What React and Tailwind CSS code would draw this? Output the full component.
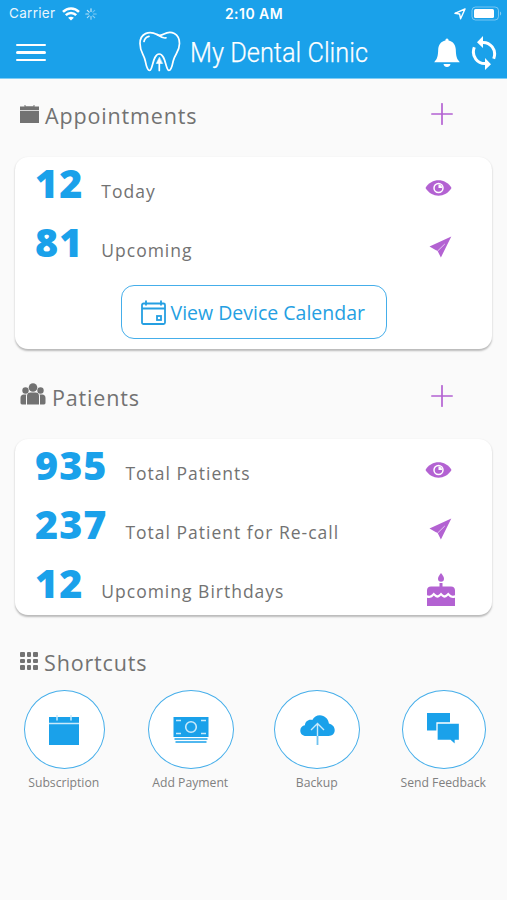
import React from "react";

const BLUE = "#1aa1ea";
const PURPLE = "#b362d2";

function StatusBar() {
  return (
    <div className="flex h-[27px] items-center justify-between pl-[9px] pr-[5px] text-white">
      <div className="flex w-[180px] items-center">
        <span className="font-['Inter',sans-serif] text-[13.500px] leading-[27px] tracking-[0.300px] opacity-90">Carrier</span>
        <svg className="ml-[7px] h-[14px] w-[18px]" viewBox="0 0 18 14" fill="none" stroke="currentColor" strokeWidth="2.500">
          <path d="M1 4.900C5.500.2 12.500.2 17 4.900" />
          <path d="M3.800 8.200c3-2.900 7.400-2.900 10.400 0" />
          <path d="M9 13.600 6.100 10.700c1.700-1.400 4.100-1.400 5.800 0Z" fill="currentColor" stroke="none" />
        </svg>
        <svg className="ml-[5px] h-[12px] w-[12px]" viewBox="-6 -6 12 12" stroke="currentColor" strokeWidth="1.100" strokeLinecap="round">
          <path d="M0-2.500V-5.200" opacity=".8" />
          <path d="M1.800-1.800 3.700-3.700" opacity=".35" />
          <path d="M2.500 0H5.200" opacity=".45" />
          <path d="M1.800 1.800 3.700 3.700" opacity=".5" />
          <path d="M0 2.500V5.200" opacity=".6" />
          <path d="M-1.800 1.800-3.700 3.700" opacity=".65" />
          <path d="M-2.500 0H-5.200" opacity=".7" />
          <path d="M-1.800-1.800-3.700-3.700" opacity=".75" />
        </svg>
      </div>
      <span className="-ml-[3px] whitespace-nowrap font-['Inter',sans-serif] text-[14px] font-semibold leading-[27px] tracking-[0.450px]">2:10 AM</span>
      <div className="flex w-[180px] items-center justify-end">
        <svg className="mr-[5px] h-[12px] w-[12px]" viewBox="0 0 12 12" fill="none" stroke="currentColor" strokeWidth="1.400" strokeLinejoin="round">
          <path d="M11 1 .9 5.300 5.600 6 6.600 10.800Z" />
        </svg>
        <svg className="h-[15px] w-[31px]" viewBox="0 0 31 15" fill="none">
          <rect x="1" y="1" width="26.500" height="13" rx="3.500" stroke="#fff" strokeOpacity=".4" strokeWidth="1" />
          <rect x="3" y="3" width="20" height="9" rx="1.500" fill="#fff" />
          <path d="M29 5.500c1.600.8 1.600 3.200 0 4Z" fill="#fff" opacity=".45" />
        </svg>
      </div>
    </div>
  );
}

function Header() {
  return (
    <header className="h-[79px] border-b border-[#7fcdf5] bg-[#1aa1ea] text-white">
      <StatusBar />
      <div className="flex h-[51px] items-center pl-[16px] pr-[10px]">
        <div className="flex w-[30px] flex-col gap-[5px]">
          <span className="h-[2.500px] rounded bg-white" />
          <span className="h-[2.500px] rounded bg-white" />
          <span className="h-[2.500px] rounded bg-white" />
        </div>
        <svg className="-mt-[2px] ml-[92px] h-[42px] w-[44px]" viewBox="0 0 44 42" fill="none" stroke="currentColor" strokeWidth="1.700" strokeLinecap="round" strokeLinejoin="round">
          <path d="M19 3.500C11-.8 2 2.500 2 12.500c0 8.500 3.800 10.500 5.300 17.500.9 4.500 2 9.500 4.200 9.500 3.500 0 3-16.500 9.700-16.500s6.300 16.500 9.800 16.500c2.200 0 3.300-5 4.200-9.500 1.500-7 6.300-9 6.300-17.500 0-10-8.500-13.500-15.500-9.500-2.500 1.500-4 2.200-7 .5Z" />
          <path d="M19 3.500C21.500 5 25 7.800 28 6.800M6 10.500c.6-3 2.200-4.600 5-5.200" />
          <path d="M21.300 39.500V31" />
          <path d="M21.300 26.500 18.300 32.500h6Z" fill="currentColor" strokeWidth=".6" />
        </svg>
        <svg className="-mt-[2px] ml-[7px] h-[40px] w-[182px] overflow-visible" viewBox="0 0 182 40">
          <text x="1" y="30" textLength="178" lengthAdjust="spacingAndGlyphs" fill="currentColor" stroke="currentColor" strokeWidth=".25" fontFamily="Roboto, sans-serif" fontWeight="300" fontSize="28.500">My Dental Clinic</text>
        </svg>
        <svg className="ml-auto h-[32px] w-[26px]" viewBox="0 0 26 32" fill="currentColor">
          <path d="M13 1.500c1.100 0 1.500.9 1.600 1.900 4.700.9 7 4.500 7.200 9.200.2 6.700.8 9.200 4 12.600H.2c3.200-3.400 3.800-5.900 4-12.600.2-4.700 2.500-8.300 7.200-9.200.1-1 .5-1.900 1.600-1.900ZM9.500 27h7c-.3 1.900-1.700 3-3.500 3s-3.200-1.100-3.500-3Z" />
        </svg>
        <svg className="ml-[11px] h-[34px] w-[26px]" viewBox="0 0 26 34" fill="none" stroke="currentColor" strokeWidth="3">
          <path d="M10.500 6.500C19.500 5.500 26 14 22.700 22.700" />
          <path d="M15.500 27.500C6.500 28.500 0 20 3.300 11.300" />
          <path d="M12 0v12L6 6.300ZM14 22v12l6-5.700Z" fill="currentColor" stroke="none" />
        </svg>
      </div>
    </header>
  );
}

function CalendarGlyph() {
  return (
    <svg className="mr-[6px] mt-[1px] h-[19px] w-[19px]" viewBox="0 0 19 19" fill="#727272">
      <path d="M0 1.500h3V3h1.500V0h1v1.500h8V0h1v3H16V1.500h3V5H0ZM0 5.700h19V18H0Z" />
      <path d="M3 1.500h13V4H3Z" />
    </svg>
  );
}

function PeopleGlyph() {
  return (
    <svg className="-mt-[5px] mr-[6px] h-[22px] w-[26px]" viewBox="0 0 26 22" fill="#727272">
      <circle cx="5.500" cy="7.500" r="3.200" />
      <circle cx="20.500" cy="7.500" r="3.200" />
      <circle cx="13" cy="4.500" r="4.300" />
      <path d="M7 21.500V13c0-2.400 1.300-3.500 3.500-3.500h5c2.200 0 3.500 1.100 3.500 3.500v8.500ZM.5 19.500V15c0-2.300 1.200-3.500 3.300-3.500h2.600c-.3.700-.4 1.300-.4 2v8H2c-1 0-1.500-.8-1.500-2ZM25.500 19.500V15c0-2.300-1.200-3.500-3.300-3.500h-2.600c.3.700.4 1.300.4 2v8h4c1 0 1.500-.8 1.500-2Z" />
    </svg>
  );
}

function GridGlyph() {
  return (
    <div className="mr-[6px] grid h-[18px] w-[18px] grid-cols-3 gap-[2px]">
      {Array.from({ length: 9 }, (_, i) => (
        <span key={i} className="rounded-[1px] bg-[#727272]" />
      ))}
    </div>
  );
}

function Plus() {
  return (
    <svg className="ml-auto mr-[54px] h-[22px] w-[22px]" viewBox="0 0 22 22" stroke={PURPLE} strokeWidth="1.700" strokeLinecap="round">
      <path d="M11 .8v20.400M.8 11h20.400" />
    </svg>
  );
}

function Heading({ icon, title, plus }) {
  return (
    <div className="flex h-[30px] items-center pl-[20px]">
      {icon}
      <h2 className="mt-[3px] text-[21.500px] leading-[30px] tracking-[0.850px]">{title}</h2>
      {plus && <Plus />}
    </div>
  );
}

function Eye() {
  return (
    <svg className="mr-[40px] mt-[3px] h-[16px] w-[27px]" viewBox="0 0 27 16">
      <path d="M.5 8C6.500-2.200 20.500-2.200 26.500 8 20.500 18.200 6.500 18.200.5 8Z" fill={PURPLE} />
      <circle cx="13.500" cy="8" r="4.500" fill={PURPLE} stroke="#fff" strokeWidth="1.500" />
      <path d="M13.500 8V4.500A3.500 3.500 0 0 1 17 8Z" fill="#fff" />
    </svg>
  );
}

function Plane() {
  return (
    <svg className="mr-[40px] mt-[4px] h-[22px] w-[23px]" viewBox="0 0 23 22">
      <path d="M22.300.4.500 10.600l6.500 3.600 1.500.6 3.400 6.700Z" fill={PURPLE} />
      <path d="M15.800 8 8.800 14.800" stroke="#ecd5f5" strokeWidth=".9" />
    </svg>
  );
}

function Cake() {
  return (
    <svg className="mr-[37px] mt-[7px] h-[33px] w-[28px]" viewBox="0 0 28 33" fill={PURPLE}>
      <path d="M14 0c2 2.800 3 4 3 5.800a3 3 0 0 1-6 0C11 4 12 2.800 14 0Z" />
      <path d="M12.500 10h3v3.500H24c2.500 0 4 1.500 4 4v4.800c-2.700 1-3.800.5-6.800-2.800-3.300 3.600-4.100 3.600-7.200.1-3.100 3.500-3.900 3.500-7.200-.1-3 3.300-4.100 3.800-6.800 2.800v-4.800c0-2.500 1.500-4 4-4h8.500Z" />
      <path d="M0 24.700c2.800.6 4.300.3 6.800-2.200 3 3 4.500 3 7.200.1 2.700 2.900 4.200 2.900 7.200-.1 2.500 2.500 4 2.800 6.800 2.200V33H0Z" />
    </svg>
  );
}

function Row({ value, label, icon }) {
  return (
    <div className="flex h-[58.660px] items-center pl-[20px]">
      <div className="-mt-[6px] flex flex-1 items-baseline">
        <span className="text-[39.500px] font-extrabold leading-[54px] tracking-[1px] text-[#1aa1ea]">{value}</span>
        <span className="ml-[18px] text-[17.500px] tracking-[1px]">{label}</span>
      </div>
      {icon}
    </div>
  );
}

function Card({ children, className }) {
  return <section className={`mx-[15px] rounded-[13px] bg-white shadow-[0_1.500px_2px_rgba(0,0,0,0.26)] ${className}`}>{children}</section>;
}

function Shortcut({ label, ring, children }) {
  return (
    <div className="flex w-[126.600px] flex-col items-center">
      <div className={`flex h-[79px] items-center justify-center rounded-[50%] border-[1.500px] border-[#45aeea] bg-white ${ring}`}>{children}</div>
      <span className="mt-[5px] whitespace-nowrap pr-[1px] text-[12.200px] leading-[17px] text-[#808080]">{label}</span>
    </div>
  );
}

export default function App() {
  return (
    <main className="h-[900px] w-[507px] overflow-hidden bg-[#fafafa] font-['Open_Sans',sans-serif] text-[#727272]">
      <Header />
      <div className="pt-[20px]">
        <Heading icon={<CalendarGlyph />} title="Appointments" plus />
      </div>
      <Card className="mt-[28px] h-[192px]">
        <Row value="12" label="Today" icon={<Eye />} />
        <Row value="81" label="Upcoming" icon={<Plane />} />
        <button className="mx-auto mt-[11px] flex h-[54px] w-[266px] items-center rounded-[13px] border-[1.500px] border-[#45aeea] pl-[19px] text-[#259fe2]">
          <svg className="h-[25px] w-[25px]" viewBox="0 0 25 25" fill="none" stroke="currentColor" strokeWidth="1.800">
            <rect x="1" y="3.500" width="23" height="20.500" rx="1.500" />
            <path d="M1 8.500h23M5 .5v5M20 .5v5" />
            <rect x="16" y="16" width="4" height="4" />
          </svg>
          <span className="ml-[5px] mt-[1px] whitespace-nowrap text-[19.500px] leading-[26px]">View Device Calendar</span>
        </button>
      </Card>
      <div className="pt-[32px]">
        <Heading icon={<PeopleGlyph />} title="Patients" plus />
      </div>
      <Card className="mt-[28px] h-[176px]">
        <Row value="935" label="Total Patients" icon={<Eye />} />
        <Row value="237" label="Total Patient for Re-call" icon={<Plane />} />
        <Row value="12" label="Upcoming Birthdays" icon={<Cake />} />
      </Card>
      <div className="pt-[31px]">
        <Heading icon={<GridGlyph />} title="Shortcuts" />
      </div>
      <div className="mt-[14px] flex pl-[1px]">
        <Shortcut label="Subscription" ring="w-[81px]">
          <svg className="h-[30px] w-[30px]" viewBox="0 0 30 30">
            <path d="M0 2h30v28H0Z" fill={BLUE} />
            <path d="M0 8.500h30M8 0v5.500M22 0v5.500" stroke="#c9eafb" strokeWidth="1.500" />
          </svg>
        </Shortcut>
        <Shortcut label="Add Payment" ring="w-[86px]">
          <svg className="h-[26px] w-[36px]" viewBox="0 0 36 26" fill="none">
            <path d="M.5 0h35v20H.5Z" fill={BLUE} />
            <path d="M1.500 22h33M2.500 25h31" stroke={BLUE} strokeWidth="1.500" />
            <circle cx="18" cy="10" r="5.300" stroke="#c9eafb" strokeWidth="1.600" />
            <path d="M3 3.500h5M28 3.500h5M3 16.500h5M28 16.500h5" stroke="#c9eafb" strokeWidth="1.500" />
          </svg>
        </Shortcut>
        <Shortcut label="Backup" ring="w-[86px]">
          <svg className="h-[30px] w-[35px]" viewBox="0 0 35 30" fill="none">
            <path d="M6 21C2.500 21 .3 18.700.3 15.500c0-3 2-5 4.600-5.300C5.200 6.500 8.500 4 12.300 5 14 2 16.500.3 19.900.3c4.700 0 8.500 3.600 9 8.300C32.500 9.500 34.700 12 34.700 15.300c0 3.400-2.400 5.700-6.100 5.700Z" fill={BLUE} />
            <path d="M17.500 9v12M11 15l6.500-6.500L24 15" stroke="#c9eafb" strokeWidth="1.400" />
            <path d="M17.500 21v9" stroke="#6fc2f0" strokeWidth="1.800" />
          </svg>
        </Shortcut>
        <Shortcut label="Send Feedback" ring="w-[84px]">
          <svg className="h-[33px] w-[33px]" viewBox="0 0 33 33" fill={BLUE}>
            <path d="M0 0h23v17.500H0Z" />
            <path d="M10 10h22.500v17.500h-4.200v4.500l-5-4.500H10Z" stroke="#fff" strokeWidth="1.300" />
          </svg>
        </Shortcut>
      </div>
    </main>
  );
}
